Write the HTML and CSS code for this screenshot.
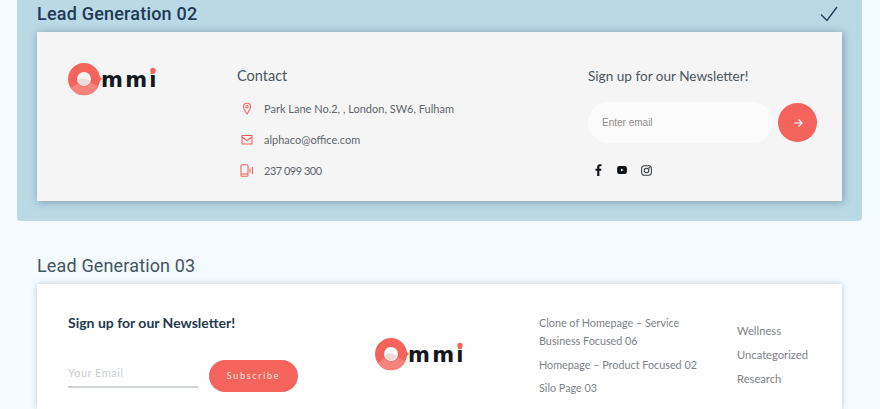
FILE: index.html
```html
<!DOCTYPE html>
<html>
  <head>
    <meta charset="utf-8" />
    <meta name="viewport" content="width=device-width, initial-scale=1.0" />
    <title>Lead Generation</title>
    <link rel="stylesheet" href="styles.css">
  </head>
  <body>
    <div class="item selected">
      <div class="item-head">
        <span class="item-title strong">Lead Generation 02</span>
        <svg class="check" width="22" height="18" viewBox="0 0 22 18">
          <path d="M4 9.500 L10 15.500 L20 2" fill="none" stroke="#1f3a55" stroke-width="1.300" />
        </svg>
      </div>
      <div class="card card-one">
        <div>
          <svg class="logo" width="100" height="34" viewBox="0 0 100 34">
            <defs>
              <linearGradient id="logo-ink" gradientUnits="userSpaceOnUse" x1="0" y1="0" x2="0" y2="34">
                <stop offset="0.38" stop-color="#f4645c" />
                <stop offset="0.38" stop-color="#14181d" />
              </linearGradient>
            </defs>
            <circle cx="17" cy="17" r="11.500" fill="none" stroke="#f4645c" stroke-width="9" />
            <path d="M7.500 23.500 a11.500 11.500 0 0 0 20 -1" fill="none" stroke="#f5827b" stroke-width="9" />
            <path d="M32 14 l3 3 -3 3 z" fill="#f4645c" />
            <path d="M10.500 19 a6.500 5 0 0 1 12 1 a6.800 6.800 0 0 1 -12 -1 z" fill="#e9dbd6" />
            <text class="logo-text" x="34" y="25" fill="url(#logo-ink)">mmi</text>
            <circle cx="86" cy="8.500" r="2.700" fill="#f4645c" />
          </svg>
        </div>
        <div class="contact">
          <div class="heading">Contact</div>
          <div class="contact-row">
            <svg width="12" height="13" viewBox="0 0 12 13" fill="none" stroke="#f4645c" stroke-width="1.100">
              <path d="M6 12 C4 9 2.500 7 2.500 4.700 a3.500 3.500 0 0 1 7 0 C9.500 7 8 9 6 12 z" />
              <circle cx="6" cy="4.700" r="1.200" />
            </svg>
            <span>Park Lane No.2, , London, SW6, Fulham</span>
          </div>
          <div class="contact-row">
            <svg width="12" height="11" viewBox="0 0 12 11" fill="none" stroke="#f4645c" stroke-width="1.100">
              <path d="M1 1.500 h10 v8.500 h-10 z" />
              <path d="M1 3 L6 6.500 L11 3" />
            </svg>
            <span>alphaco@office.com</span>
          </div>
          <div class="contact-row">
            <svg width="14" height="13" viewBox="0 0 14 13" fill="none" stroke="#f4645c" stroke-width="1.100">
              <rect x="1" y="0.700" width="7" height="11.600" rx="1" />
              <path d="M1 10 h7" />
              <path d="M10 4.500 v4 M12.500 3 v7" />
            </svg>
            <span class="phone">237 099 300</span>
          </div>
        </div>
        <div class="newsletter">
          <div class="heading small">Sign up for our Newsletter!</div>
          <div class="email-form">
            <div class="email-input">Enter email</div>
            <div class="email-send">
              <svg width="10" height="10" viewBox="0 0 10 10" fill="none" stroke="#ffffff" stroke-width="1.200">
                <path d="M1 5 h8 M5.500 1.500 L9 5 L5.500 8.500" />
              </svg>
            </div>
          </div>
          <div class="socials">
            <svg width="7" height="12" viewBox="0 0 8 14">
              <path d="M2.500 14 V7.800 H0.500 V5.500 H2.500 V3.600 C2.500 1.400 3.700 0.300 5.500 0.300 H7.500 V2.600 H6.200 C5.300 2.600 5 3 5 3.800 V5.500 H7.400 L7 7.800 H5 V14 z" fill="#0c0f14" />
            </svg>
            <svg width="10" height="8" viewBox="0 0 11 9">
              <rect width="11" height="9" rx="2.500" fill="#0c0f14" />
              <path d="M4.300 2.700 L7.300 4.500 L4.300 6.300 z" fill="#f5f5f5" />
            </svg>
            <svg width="11" height="11" viewBox="0 0 12 12" fill="none" stroke="#33373c" stroke-width="1.100">
              <rect x="0.700" y="0.700" width="10.600" height="10.600" rx="3" />
              <circle cx="6" cy="6" r="2.500" />
              <circle cx="9" cy="3" r="0.400" />
            </svg>
          </div>
        </div>
      </div>
    </div>

    <div class="item">
      <div class="item-head">
        <span class="item-title">Lead Generation 03</span>
      </div>
      <div class="card card-two">
        <div class="signup">
          <div class="signup-title">Sign up for our Newsletter!</div>
          <div class="signup-form">
            <div class="signup-input">Your Email</div>
            <div class="signup-button">Subscribe</div>
          </div>
        </div>
        <div class="logo-center">
          <svg class="logo" width="100" height="34" viewBox="0 0 100 34">
            <circle cx="17" cy="17" r="11.500" fill="none" stroke="#f4645c" stroke-width="9" />
            <path d="M7.500 23.500 a11.500 11.500 0 0 0 20 -1" fill="none" stroke="#f5827b" stroke-width="9" />
            <path d="M32 14 l3 3 -3 3 z" fill="#f4645c" />
            <path d="M10.500 19 a6.500 5 0 0 1 12 1 a6.800 6.800 0 0 1 -12 -1 z" fill="#e9dbd6" />
            <text class="logo-text" x="34" y="25" fill="url(#logo-ink)">mmi</text>
            <circle cx="86" cy="8.500" r="2.700" fill="#f4645c" />
          </svg>
        </div>
        <ul class="links">
          <li>Clone of Homepage – Service<br>Business Focused 06</li>
          <li>Homepage – Product Focused 02</li>
          <li>Silo Page 03</li>
        </ul>
        <ul class="links links-cats">
          <li>Wellness</li>
          <li>Uncategorized</li>
          <li>Research</li>
        </ul>
      </div>
    </div>
  </body>
</html>
```

FILE: styles.css
```css
html, body {
  height: 409px;
  overflow: hidden;
}

body {
  margin: 0;
  padding: 0;
  background-color: #f3fbff;
  font-family: Lato, Arial, sans-serif;
}

.item {
  width: 805px;
  margin: 31px 0 0 17px;
  padding: 0 20px;
}

.item.selected {
  margin-top: 0;
  padding-bottom: 20px;
  background-color: #b9d9e7;
  border-radius: 0 0 4px 4px;
}

.item-head {
  display: flex;
  justify-content: space-between;
  height: 32px;
}

.item-title {
  font-family: Roboto, Arial, sans-serif;
  font-size: 18px;
  line-height: 28px;
  letter-spacing: 0.15px;
  color: #47535e;
}

.item-title.strong {
  font-weight: 500;
  letter-spacing: 0.2px;
  color: #1f3a55;
}

.check {
  margin: 5px 3px 0 0;
}

.card {
  display: grid;
}

.card-one {
  grid-template-columns: 170px 351px 1fr;
  height: 169px;
  padding-left: 30px;
  background-color: #f5f5f5;
  box-shadow: 1px 1px 8px rgba(30, 60, 80, 0.4);
}

.card-two {
  grid-template-columns: 306px 165px 198px 1fr;
  height: 125px;
  padding-left: 31px;
  background-color: #ffffff;
  box-shadow: 0 0 6px rgba(40, 60, 80, 0.25);
}

.logo {
  display: block;
}

.logo-text {
  font-family: "DejaVu Sans", sans-serif;
  font-size: 21px;
  font-weight: 700;
  letter-spacing: 2.300px;
}

.card-one .logo {
  margin-top: 30px;
}

.heading {
  font-size: 14.500px;
  line-height: 20px;
  color: #4a5660;
}

.heading.small {
  font-size: 13.600px;
}

.contact,
.newsletter {
  padding-top: 34px;
}

.contact .heading {
  margin-bottom: 7px;
}

.contact-row {
  display: flex;
  align-items: center;
  height: 31px;
  font-size: 11px;
  color: #5f666c;
}

.contact-row svg {
  flex: none;
  width: 14px;
  margin: 0 10px 0 3px;
}

.phone {
  letter-spacing: -0.500px;
}

.email-form {
  display: flex;
  align-items: center;
  gap: 5px;
  margin-top: 16px;
}

.email-input {
  width: 171px;
  height: 41px;
  padding-left: 14px;
  border-radius: 21px;
  background-color: #fbfbfb;
  font-family: "Liberation Sans", Arial, sans-serif;
  font-size: 10px;
  line-height: 41px;
  color: #8d8d8d;
}

.email-send {
  display: flex;
  align-items: center;
  justify-content: center;
  width: 39px;
  height: 39px;
  border-radius: 50%;
  background-color: #f4645c;
}

.socials {
  display: flex;
  align-items: center;
  gap: 14.500px;
  height: 16px;
  margin: 19px 0 0 7px;
}

.signup {
  padding-top: 30px;
}

.signup-title {
  font-size: 14px;
  font-weight: 700;
  line-height: 18px;
  color: #26394d;
}

.signup-form {
  display: flex;
  gap: 11px;
  margin-top: 28px;
}

.signup-input {
  width: 130px;
  height: 26px;
  border-bottom: 2px solid #cfd3d6;
  font-size: 11px;
  line-height: 26px;
  letter-spacing: 0.5px;
  color: #c9ced3;
}

.signup-button {
  width: 89px;
  height: 32px;
  border-radius: 16px;
  background-color: #f4645c;
  font-size: 9px;
  line-height: 32px;
  letter-spacing: 1.700px;
  text-align: center;
  color: #fbe3e1;
}

.logo-center {
  padding-top: 53px;
}

.links {
  display: flex;
  flex-direction: column;
  gap: 5.500px;
  margin: 0;
  padding: 30px 0 0;
  list-style: none;
  font-size: 10.800px;
  line-height: 18px;
  color: #7c8287;
}

.links-cats {
  gap: 6px;
  padding-top: 38px;
  font-size: 11.200px;
}
```
